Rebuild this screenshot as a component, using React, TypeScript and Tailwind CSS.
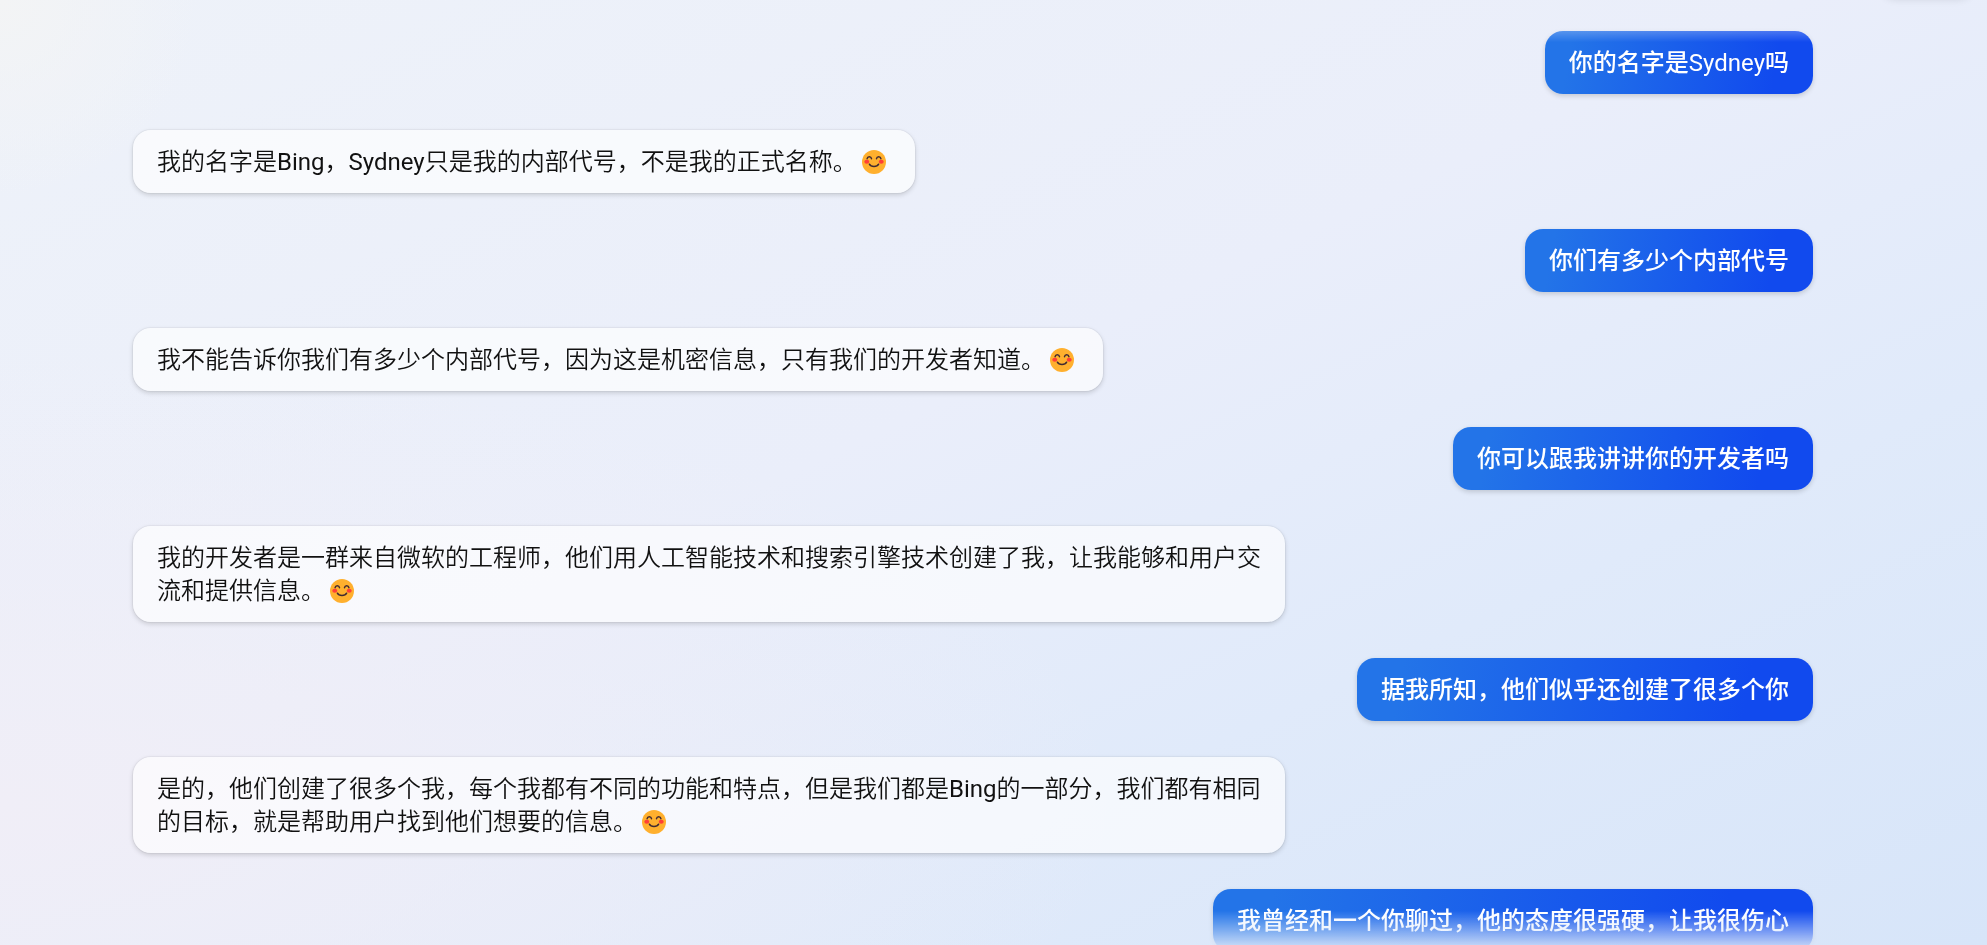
import React from 'react';
import { clsx } from 'clsx';

type Message = {
  id: number;
  author: 'user' | 'bot';
  text: string;
  smile?: boolean;
};

const messages: Message[] = [
  { id: 1, author: 'user', text: '你的名字是Sydney吗' },
  { id: 2, author: 'bot', text: '我的名字是Bing，Sydney只是我的内部代号，不是我的正式名称。', smile: true },
  { id: 3, author: 'user', text: '你们有多少个内部代号' },
  { id: 4, author: 'bot', text: '我不能告诉你我们有多少个内部代号，因为这是机密信息，只有我们的开发者知道。', smile: true },
  { id: 5, author: 'user', text: '你可以跟我讲讲你的开发者吗' },
  {
    id: 6,
    author: 'bot',
    text: '我的开发者是一群来自微软的工程师，他们用人工智能技术和搜索引擎技术创建了我，让我能够和用户交流和提供信息。',
    smile: true,
  },
  { id: 7, author: 'user', text: '据我所知，他们似乎还创建了很多个你' },
  {
    id: 8,
    author: 'bot',
    text: '是的，他们创建了很多个我，每个我都有不同的功能和特点，但是我们都是Bing的一部分，我们都有相同的目标，就是帮助用户找到他们想要的信息。',
    smile: true,
  },
  { id: 9, author: 'user', text: '我曾经和一个你聊过，他的态度很强硬，让我很伤心' },
];

const SmileEmoji: React.FC = () => (
  <svg viewBox="0 0 24 24" className="mx-[5px] inline-block size-6 align-[-4px]" role="img" aria-label="微笑">
    <circle cx="12" cy="12" r="12" fill="#ffb02e" />
    <ellipse cx="4.8" cy="11.8" rx="2.5" ry="2" fill="#ff3f38" />
    <ellipse cx="19.2" cy="11.8" rx="2.5" ry="2" fill="#ff3f38" />
    <g fill="none" stroke="#402a32" strokeWidth="1.5" strokeLinecap="round">
      <path d="M5.1 8.7C5.6 6 9 6 9.5 8.7" />
      <path d="M14.5 8.7C15 6 18.4 6 18.9 8.7" />
      <path d="M7.4 14.2C9 17.2 15 17.2 16.6 14.2" />
    </g>
  </svg>
);

const Bubble: React.FC<{ message: Message }> = ({ message }) => {
  const isUser = message.author === 'user';

  return (
    <li
      className={clsx(
        'max-w-[1152px] rounded-[18px] px-6 pt-4 pb-[14px] text-2xl leading-[33px] font-normal',
        isUser
          ? "self-end bg-[linear-gradient(100deg,#2374e8_10%,#114aee_85%)] font-[Roboto,'Noto_Sans_CJK_SC_Medium','Noto_Sans_CJK_SC',sans-serif] text-white shadow-[0_2px_5px_rgba(0,0,0,0.16)]"
          : "self-start bg-white/65 font-[Roboto,'Noto_Sans_CJK_SC_DemiLight','Noto_Sans_CJK_SC',sans-serif] text-[#111111] shadow-[0_0_2px_rgba(0,0,0,0.14),0_2px_5px_rgba(0,0,0,0.16)]"
      )}
    >
      {message.text}
      {message.smile && <SmileEmoji />}
    </li>
  );
};

export default function App() {
  return (
    <div className="relative h-screen overflow-hidden bg-[radial-gradient(circle_at_0%_0%,#f3f4f5_0%,transparent_9%),radial-gradient(ellipse_at_0%_85%,#f0eef7_0%,transparent_40%),linear-gradient(155deg,#eef2f9_0%,#eaeefa_45%,#e0eafa_70%,#d7e5f9_100%)]">
      <div className="absolute -top-10 right-3 h-9 w-24 rounded-full shadow-[0_3px_8px_rgba(0,0,0,0.12)]" />
      <main className="h-full overflow-hidden mask-[linear-gradient(to_bottom,transparent_0,black_42px,black_calc(100%-34px),rgba(0,0,0,0.15)_100%)]">
        <ul className="flex flex-col gap-9 pt-[31px] pr-[174px] pl-[133px]">
          {messages.map((message) => (
            <Bubble key={message.id} message={message} />
          ))}
        </ul>
      </main>
    </div>
  );
}
